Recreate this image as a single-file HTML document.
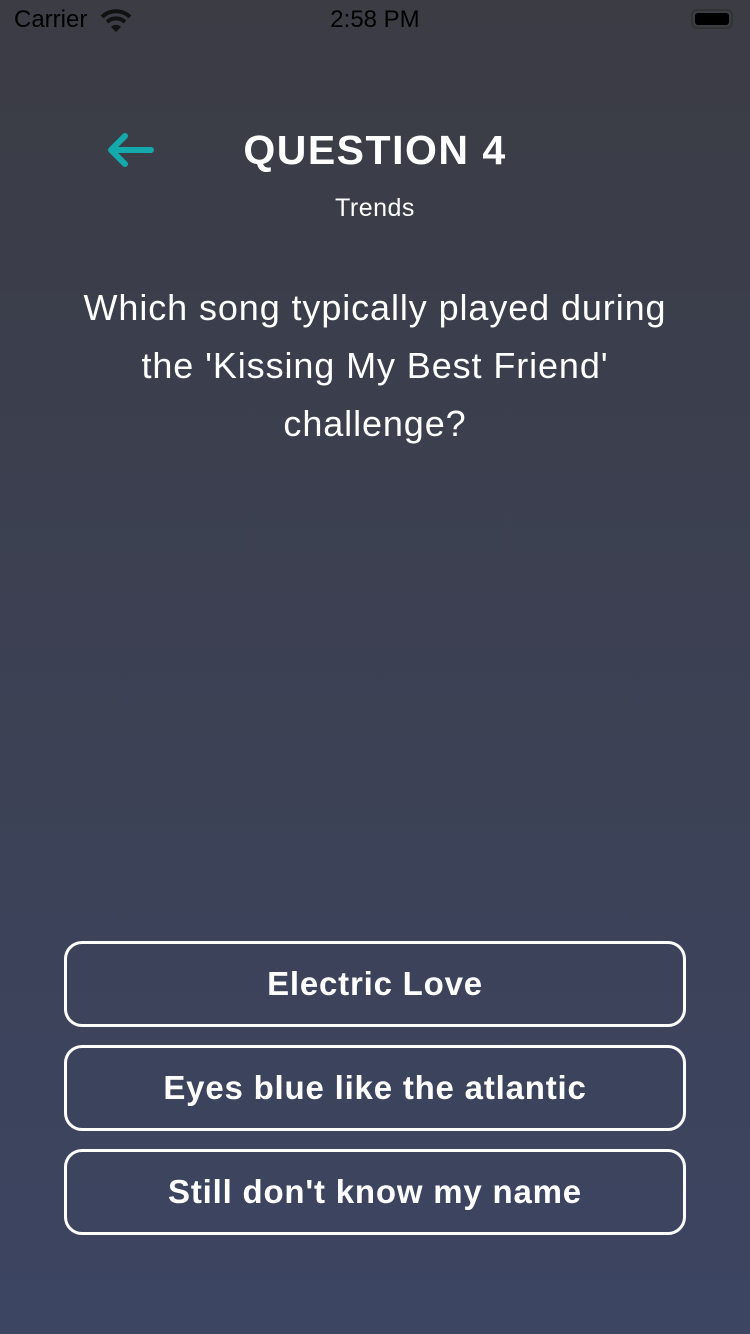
<!DOCTYPE html>
<html><head><meta charset="utf-8"><style>
html,body{margin:0;padding:0}
body{width:750px;height:1334px;position:relative;overflow:hidden;background:linear-gradient(#3b3c44,#3c4562);font-family:"Liberation Sans",sans-serif;color:#fff}
.abs{position:absolute}
.status{top:0;left:0;width:750px;height:40px;color:#000;font-size:24px}
.title{top:124px;left:0;width:750px;text-align:center;font-weight:bold;font-size:41px;letter-spacing:1.5px;line-height:52px}
.sub{top:193px;left:0;width:750px;text-align:center;font-size:25px;letter-spacing:0.5px;line-height:30px}
.q{top:279px;left:55px;width:640px;text-align:center;font-size:36px;letter-spacing:0.9px;line-height:58px}
.btn{left:64px;width:616px;height:80px;border:3px solid #fff;border-radius:18px;text-align:center;line-height:80px;font-weight:bold;font-size:33px;letter-spacing:0.8px}
</style></head><body>
<div class="abs status">
 <span class="abs" style="left:14px;top:6px">Carrier</span>
 <svg class="abs" style="left:100px;top:9px" width="32" height="24" viewBox="0 0 32 24"><path d="M2 8 A20 20 0 0 1 30 8" stroke="#111" stroke-width="4" fill="none"/><path d="M7 13 A13 13 0 0 1 25 13" stroke="#111" stroke-width="4" fill="none"/><path d="M11 18 L16 23 L21 18 A7 7 0 0 0 11 18Z" fill="#111"/></svg>
 <span class="abs" style="left:0;width:750px;text-align:center;top:6px">2:58 PM</span>
 <div class="abs" style="left:691px;top:9px;width:42px;height:20px;border:2px solid #333;border-radius:6px;box-sizing:border-box;padding:2px"><div style="width:100%;height:100%;background:#000;border-radius:3px"></div></div>
</div>
<svg class="abs" style="left:104px;top:130px" width="52" height="40" viewBox="0 0 52 40"><path d="M47 20 H8 M21 6 L7 20 L21 34" stroke="#14a9ad" stroke-width="6" stroke-linecap="round" stroke-linejoin="round" fill="none"/></svg>
<div class="abs title">QUESTION 4</div>
<div class="abs sub">Trends</div>
<div class="abs q">Which song typically played during the 'Kissing My Best Friend' challenge?</div>
<div class="abs btn" style="top:941px">Electric Love</div>
<div class="abs btn" style="top:1045px">Eyes blue like the atlantic</div>
<div class="abs btn" style="top:1149px">Still don't know my name</div>
</body></html>
